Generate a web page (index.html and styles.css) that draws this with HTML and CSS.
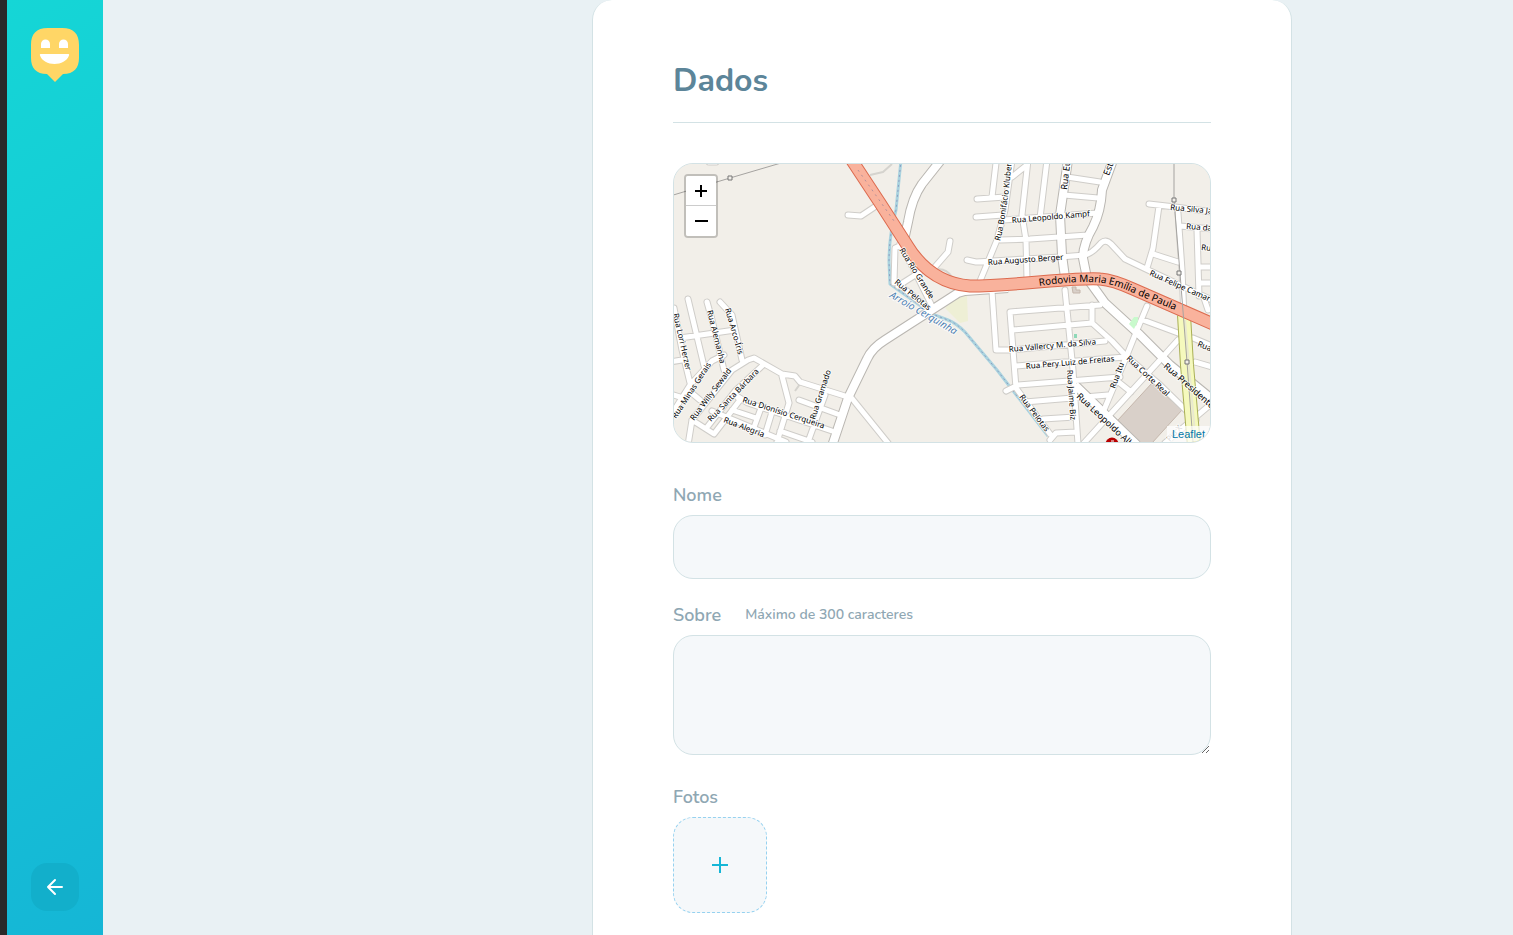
FILE: index.html
```html
<!DOCTYPE html>
<html lang="pt-BR">
<head>
<meta charset="utf-8">
<title>Dados</title>
<link rel="stylesheet" href="styles.css">
</head>
<body>
<div class="page">
  <aside class="sidebar">
    <svg class="logo" viewBox="0 0 48 54" role="img" aria-label="Happy">
      <path fill="#ffd666" d="M17 0h14c12 0 17 6 17 17v13c0 10-5 16-16 16l-8 8-8-8C5 46 0 40 0 30V17C0 6 5 0 17 0z"/>
      <path fill="#fff" d="M10 20v-4a4.500 4.500 0 0 1 9 0v4zM28 20v-4a4.500 4.500 0 0 1 9 0v4zM10 26h27c1 0 1.500.6 1 1.500C36 33 30 36 23.500 36S11 33 9 27.500c-.4-.9 0-1.500 1-1.500z"/>
    </svg>
    <button class="back" type="button" aria-label="Voltar">
      <svg width="24" height="24" viewBox="0 0 24 24" fill="none" stroke="#fff" stroke-width="2" stroke-linecap="round" stroke-linejoin="round"><path d="M19 12H5M12 19l-7-7 7-7"/></svg>
    </button>
  </aside>
  <main class="main">
    <form class="card">
      <h1 class="title">Dados</h1>
      <div class="map">
        <svg class="tiles" viewBox="674 164 536 278" preserveAspectRatio="xMidYMid slice">
          <defs>
            <path id="minor" d="M709 162L716 162M848 215L861 216L876 206M902 245L895 248L894 283M898 286L920 272M900 244L913 268L932 306M896 282L928 308M950 241L948 252L934 268M996 163L992 197M977 199L1005 197M976 217L1003 215M1012 160L1005 210L997 240L980 281M1012 177L1027 165M1028 160L1022 215L1026 240L1027 279M1047 160L1040 218M1003 220L1098 213M1000 240L1030 239L1088 235M967 260L976 262L1060 257L1085 255M1067 177L1100 182M1064 195L1098 198M1083 255Q1091 255 1101 243Q1106 239 1111 244L1125 259L1148 270L1212 300M1149 204L1175 207L1213 212M1159 206L1153 248L1147 268M1153 254L1178 262M1178 213L1182 270L1184 318M1180 226L1212 229M1197 230L1199 296M1200 267L1212 267M1200 283L1212 283M1208 310L1204 298M992 291L996 350L1012 350M1010 312L1016 388M1010 312L1100 305M1013 330L1092 323M1092 305L1092 323L1112 341L1126 356L1160 385L1196 420M1010 350L1105 341M1016 366L1125 357M1006 391L1018 385L1120 377M1025 402L1108 395M1043 419L1075 417M1050 440L1056 433L1076 432M1016 388L1050 434M1147 306L1137 330L1125 360L1104 410M1143 320L1178 333M1178 340L1160 360L1084 443M1116 380L1131 392M1065 290L1069 330L1073 370L1078 444M1195 362L1212 367M1193 338L1212 346M1165 443L1210 405M674 308L682 350L690 383M688 299L704 366M707 302L712 320L724 370M720 302L732 315L742 360M680 338L735 330M670 362L682 360M670 394L680 397M668 420L690 385L712 361L724 355M692 420L712 395L732 370L748 360L754 358L782 374L795 376L800 382L848 397M688 390L700 400M688 445L692 420L714 434L724 421L740 400L734 393M708 426L736 390L762 366M782 376L789 403L777 442M825 395L808 442M799 400L840 415M735 395L748 403L832 431M732 410L756 418M761 408L753 430M772 412L765 435M712 411L786 442M780 431L812 442M850 396L888 443"/>
            <path id="major" d="M941 160L922 184Q912 198 908 222L903 245M1068 160L1060 215L1062 255L1066 285M1113 160L1102 190Q1101 211 1093 227Q1083 244 1083 258L1087 278L1105 303L1140 335L1170 365L1213 400M1008 288L965 291L958 293L885 340Q872 348 867 359L848 398L832 446M1075 385L1137 445"/>
            <path id="highway" d="M851 159L880 203L907 245Q930 283 970 286Q995 286 1050 281Q1090 278 1100 279Q1113 280 1133 289L1213 324"/>
            <path id="t-highway" d="M1039 286Q1080 280 1103 283Q1120 286 1140 296L1200 320"/>
            <path id="t-bonifacio" d="M1000 241Q1007 215 1013 150"/>
          </defs>
          <rect class="land" x="600" y="100" width="700" height="400"/>
          <path fill="#eeefd5" d="M945 308L957 297L967 296L968 321L960 323z"/>
          <path fill="#8fd8b8" d="M1074 334h3v4h-3z"/>
          <path class="building" d="M1152 383L1182 410L1152 443H1138L1118 420z"/>
          <path class="building" d="M1072 287h4v3h4v3h-7z"/>
          <path class="track" d="M870 175L883 172L892 164M935 270Q945 267 952 277M800 384L795 391"/>
          <path class="stream" d="M901 160L896 210Q889 235 889 262L890 284L932 314L948 320Q956 323 965 332L997 370L1048 436"/>
          <path class="stream-dots" d="M901 160L896 210Q889 235 889 262L890 284L932 314L948 320Q956 323 965 332L997 370L1048 436"/>
          <use href="#minor" class="minor-edge"/><use href="#major" class="major-edge"/>
          <use href="#minor" class="minor"/><use href="#major" class="major"/>
          <path fill="#c8facc" d="M1129 324L1134 317L1138 317L1138 321L1134 329z"/>
          <path class="yellow-edge" d="M1184 315L1187 365L1194 446"/>
          <path class="yellow" d="M1184 315L1187 365L1194 446"/>
          <path class="yellow-gap" d="M1185 320L1189 365L1196 446"/>
          <use href="#highway" class="highway-edge"/><use href="#highway" class="highway"/>
          <path class="highway-dots" d="M858 170L894 221"/>
          <path class="wire" d="M670 196L730 178L781 163M1174 160V200L1180 273L1187 362L1193 442"/>
          <path class="pylon" d="M728 176h4v4h-4zM1172 198h4v4h-4zM1177 271h4v4h-4zM1185 360h4v4h-4z"/>
          <path d="M674 433L688 443H674z" fill="#bcc582"/>
          <circle cx="1112" cy="444" r="6.500" fill="#b80000"/><path d="M1111 441h3" stroke="#fff" fill="none"/>
          <g class="labels">
            <text transform="translate(673 314) rotate(77)">Rua Lori Herzer</text>
            <text transform="translate(707 311) rotate(76)">Rua Alemanha</text>
            <text transform="translate(725 309) rotate(74)">Rua Arco-Íris</text>
            <text transform="translate(676 419) rotate(-57)">Rua Minas Gerais</text>
            <text transform="translate(694 421) rotate(-53)">Rua Willy Sewald</text>
            <text transform="translate(711 422) rotate(-46)">Rua Santa Bárbara</text>
            <text transform="translate(742 402) rotate(18)">Rua Dionísio Cerqueira</text>
            <text transform="translate(723 422) rotate(21)">Rua Alegria</text>
            <text transform="translate(815 420) rotate(-72)">Rua Gramado</text>
            <text transform="translate(899 250) rotate(58)">Rua Rio Grande</text>
            <text transform="translate(894 283) rotate(39)">Rua Pelotas</text>
            <text class="water" transform="translate(889 297) rotate(30)">Arroio Cerquinha</text>
            <text><textPath href="#t-bonifacio">Rua Bonifácio Kluber</textPath></text>
            <text transform="translate(1012 223) rotate(-5)">Rua Leopoldo Kampf</text>
            <text transform="translate(988 265) rotate(-4)">Rua Augusto Berger</text>
            <text class="mid" transform="translate(1067 190) rotate(-83)">Rua Eu</text>
            <text class="mid" transform="translate(1109 176) rotate(-70)">Est</text>
            <text transform="translate(1170 210) rotate(5)">Rua Silva Ja</text>
            <text transform="translate(1186 229) rotate(4)">Rua da</text>
            <text transform="translate(1201 250) rotate(5)">Ru</text>
            <text transform="translate(1149 275) rotate(24)">Rua Felipe Camar</text>
            <text class="road"><textPath href="#t-highway">Rodovia Maria Emília de Paula</textPath></text>
            <text transform="translate(1009 352) rotate(-5)">Rua Vallercy M. da Silva</text>
            <text transform="translate(1026 369) rotate(-5)">Rua Pery Luiz de Freitas</text>
            <text transform="translate(1067 370) rotate(86)">Rua Jaime Biz</text>
            <text transform="translate(1019 397) rotate(53)">Rua Pelotas</text>
            <text transform="translate(1115 389) rotate(-70)">Rua Itu</text>
            <text transform="translate(1126 359) rotate(43)">Rua Corte Real</text>
            <text class="mid" transform="translate(1163 367) rotate(41)">Rua Presidente</text>
            <text class="mid" transform="translate(1076 397) rotate(43)">Rua Leopoldo Alb</text>
            <text transform="translate(1197 346) rotate(22)">Rua</text>
            <text class="faint" transform="translate(1170 442) rotate(-48)">Pio X</text>
          </g>
        </svg>
        <div class="zoom">
          <button class="zoom-btn" type="button" aria-label="Aumentar zoom"><svg width="14" height="14" viewBox="0 0 14 14"><path d="M1 7h12M7 1v12" stroke="#000" stroke-width="2"/></svg></button>
          <button class="zoom-btn" type="button" aria-label="Diminuir zoom"><svg width="14" height="14" viewBox="0 0 14 14"><path d="M1 7h13" stroke="#000" stroke-width="2"/></svg></button>
        </div>
        <a class="credit" href="#leaflet">Leaflet</a>
      </div>
      <label class="label" for="name">Nome</label>
      <input class="field" id="name" type="text">
      <label class="label" for="about">Sobre <span class="hint">Máximo de 300 caracteres</span></label>
      <textarea class="field area" id="about" maxlength="300"></textarea>
      <label class="label photos" for="photo">Fotos</label>
      <button class="add" id="photo" type="button" aria-label="Adicionar foto">
        <svg width="24" height="24" viewBox="0 0 24 24" fill="none" stroke="#15b6d6" stroke-width="2"><path d="M12 4v16M4 12h16"/></svg>
      </button>
    </form>
  </main>
</div>
</body>
</html>
```
FILE: styles.css
```css
* { box-sizing: border-box; }
body { margin: 0; background: #e9f1f4; font-family: Nunito, Lato, "Open Sans", sans-serif; }
.page { display: flex; min-height: 100vh; border-left: 7px solid #292929; }
.sidebar {
  flex: 0 0 96px; padding: 28px 24px 24px;
  display: flex; flex-direction: column; justify-content: space-between; align-items: center;
  background: linear-gradient(330deg, #15b6d6 0%, #15d6d6 100%);
}
.logo { width: 48px; height: 54px; }
.back {
  width: 48px; height: 48px; padding: 0; border: 0; border-radius: 16px;
  background: #12afcb; display: flex; align-items: center; justify-content: center;
}
.main { flex: 1; display: grid; grid-template-columns: minmax(0, 489fr) minmax(0, 700px) minmax(0, 221fr); }
.card {
  grid-column: 2; padding: 64px 80px 22px;
  background: #fff; border: 1px solid #d3e2e5; border-width: 0 1px; border-radius: 20px 20px 0 0;
}
.title {
  margin: 0 0 40px; padding-bottom: 24px; border-bottom: 1px solid #d3e2e5;
  font-size: 32px; line-height: 34px; font-weight: 700; color: #5c8599;
}
.map {
  position: relative; height: 280px; margin-bottom: 40px; overflow: hidden;
  border: 1px solid #d3e2e5; border-radius: 20px; background: #f2efe9;
}
.tiles { display: block; width: 100%; height: 100%; }
.zoom {
  position: absolute; left: 10px; top: 10px; border: 2px solid rgba(0, 0, 0, .2);
  border-radius: 4px; background-clip: padding-box; overflow: hidden;
}
.zoom-btn {
  width: 30px; height: 30px; padding: 0; border: 0; background: #fff;
  display: flex; align-items: center; justify-content: center;
}
.zoom-btn:first-child { border-bottom: 1px solid #ccc; }
.credit {
  position: absolute; right: 0; bottom: 0; padding: 0 5px; background: rgba(255, 255, 255, .7);
  font: 11px/16px "Liberation Sans", Arial, sans-serif; color: #0078a8; text-decoration: none;
}
.label { display: flex; align-items: center; margin-bottom: 8px; font-size: 18px; line-height: 24px; font-weight: 600; color: #8fa7b3; }
.hint { margin-left: 24px; font-size: 14px; font-weight: 600; }
.field {
  display: block; width: 100%; height: 64px; margin-bottom: 24px; padding: 0 16px;
  background: #f5f8fa; border: 1px solid #d3e2e5; border-radius: 20px; font: inherit; color: #5c8599;
}
.area { height: 120px; margin-bottom: 30px; padding: 16px; resize: vertical; }
.add {
  width: 94px; height: 96px; padding: 0; background: #f5f8fa; border: 1px dashed #96d2f0;
  border-radius: 20px; display: flex; align-items: center; justify-content: center;
}
.land { fill: #f2efe9; }
.building { fill: #d9d0c9; stroke: #c4b6ab; stroke-width: 1; }
.track, .stream, .stream-dots, .minor, .minor-edge, .major, .major-edge, .highway, .highway-edge,
.highway-dots, .yellow, .yellow-edge, .yellow-gap, .wire { fill: none; stroke-linejoin: round; }
.track { stroke: #d5d3ce; stroke-width: 2; }
.stream { stroke: #aad3df; stroke-width: 3; }
.stream-dots { stroke: #8d9dc0; stroke-width: 1; stroke-dasharray: 2 3; }
.minor-edge { stroke: #cfcdc9; stroke-width: 7; stroke-linecap: round; }
.minor { stroke: #fff; stroke-width: 5; stroke-linecap: round; }
.major-edge { stroke: #bab7b2; stroke-width: 10; }
.major { stroke: #fff; stroke-width: 8; }
.highway-edge { stroke: #dc6b4f; stroke-width: 13; }
.highway { stroke: #f9b29c; stroke-width: 11; }
.highway-dots { stroke: #b58f98; stroke-width: 1; stroke-dasharray: 2 4; }
.yellow-edge { stroke: #aab055; stroke-width: 14; }
.yellow { stroke: #f5f9bd; stroke-width: 12; }
.yellow-gap { stroke: #e9e9cf; stroke-width: 2; }
.wire { stroke: #a5a3a0; stroke-width: 1; }
.pylon { fill: #f2efe9; stroke: #777; stroke-width: 1; }
.labels { font-family: "Noto Sans", "Open Sans", sans-serif; font-size: 8px; fill: #000; stroke: rgba(255, 255, 255, .7); stroke-width: 2px; stroke-linejoin: round; paint-order: stroke; }
.labels .water { font-size: 10px; font-style: italic; fill: #4d80b3; }
.labels .mid { font-size: 9px; }
.labels .road { font-size: 10px; stroke: #f9b29c; }
.labels .faint { fill: #888; }
```
